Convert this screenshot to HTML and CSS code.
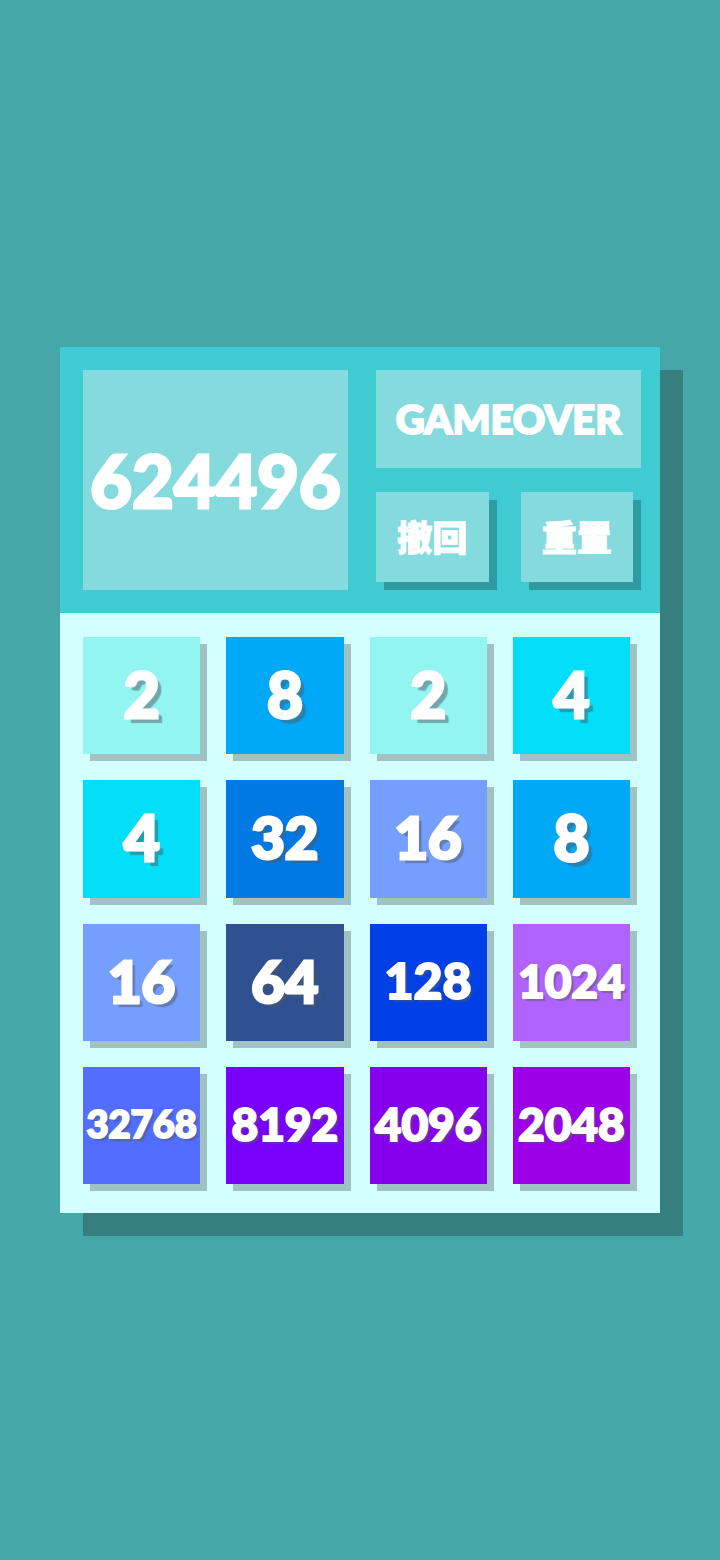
FILE: index.html
```html
<!DOCTYPE html>
<html lang="zh-CN">
<head>
    <meta charset="UTF-8">
    <meta name="viewport" content="width=device-width, initial-scale=1.0">
    <title>2048</title>
    <link rel="stylesheet" href="styles.css">
</head>
<body>
    <main class="game">
        <header class="header">
            <div class="score">624496</div>
            <div class="panel">
                <div class="state">GAMEOVER</div>
                <div class="buttons">
                    <button class="btn" type="button">撤回</button>
                    <button class="btn" type="button">重置</button>
                </div>
            </div>
        </header>

        <div class="board">
            <div class="tile n2">2</div>
            <div class="tile n8">8</div>
            <div class="tile n2">2</div>
            <div class="tile n4">4</div>

            <div class="tile n4">4</div>
            <div class="tile len2 n32">32</div>
            <div class="tile len2 n16">16</div>
            <div class="tile n8">8</div>

            <div class="tile len2 n16">16</div>
            <div class="tile len2 n64">64</div>
            <div class="tile len3 n128">128</div>
            <div class="tile len4 n1024">1024</div>

            <div class="tile len5 n32768">32768</div>
            <div class="tile len4 n8192">8192</div>
            <div class="tile len4 n4096">4096</div>
            <div class="tile len4 n2048">2048</div>
        </div>
    </main>
</body>
</html>
```
FILE: styles.css
```css
* { box-sizing: border-box; }
body { margin: 0; min-height: 100vh; display: flex; justify-content: center; align-items: center; background: #46a7a8; color: white; font-family: Lato, "Noto Sans CJK SC", sans-serif; font-weight: 900; }
.game { width: calc(100% - 120px); max-width: 600px; background: #d4ffff; box-shadow: 23px 23px 0 rgba(0, 0, 0, 0.24); }

/* score and controls */
.header { display: grid; grid-template-columns: 1fr 1fr; gap: 28px; padding: 23px 19px 23px 23px; background: #3fcbd2; }
.score, .state { display: flex; justify-content: center; align-items: center; background: #84dadc; }
.score { height: 220px; font-size: 72px; -webkit-text-stroke: 3px white; }
.panel { display: flex; flex-direction: column; gap: 24px; }
.state { height: 98px; font-size: 40px; -webkit-text-stroke: 2px white; }
.buttons { display: grid; grid-template-columns: 1fr 1fr; gap: 32px; padding-right: 8px; }
.btn { height: 90px; padding: 0 0 4px; border: 0; background: #84dadc; color: white; font: inherit; font-size: 35px; -webkit-text-stroke: 1px white; box-shadow: 8px 8px 0 rgba(0, 0, 0, 0.24); cursor: pointer; }

/* tiles */
.board { display: grid; grid-template-columns: repeat(4, 1fr); gap: 26px; padding: 24px 30px 29px 23px; }
.tile { display: flex; justify-content: center; align-items: center; aspect-ratio: 1; min-width: 0; padding-bottom: 4px; font-size: 62px; -webkit-text-stroke: 3px white; box-shadow: 7px 7px 0 rgba(0, 0, 0, 0.24); text-shadow: 5px 5px 1px rgba(80, 90, 100, 0.5); }
.len2 { font-size: 58px; text-shadow: 4px 4px 1px rgba(80, 90, 100, 0.5); }
.len3, .len4, .len5 { -webkit-text-stroke: 2px white; text-shadow: 3px 3px 1px rgba(80, 90, 100, 0.5); }
.len3 { font-size: 50px; }
.len4 { font-size: 46px; }
.len5 { font-size: 38px; }

.n2 { background: #93f5f2; }
.n4 { background: #00def8; }
.n8 { background: #00a8f8; }
.n16 { background: #749fff; }
.n32 { background: #0079e4; }
.n64 { background: #2f5192; }
.n128 { background: #0040e6; }
.n1024 { background: #b063ff; }
.n2048 { background: #9b00e8; }
.n4096 { background: #8700ee; }
.n8192 { background: #7900fb; }
.n32768 { background: #526dff; }
```
